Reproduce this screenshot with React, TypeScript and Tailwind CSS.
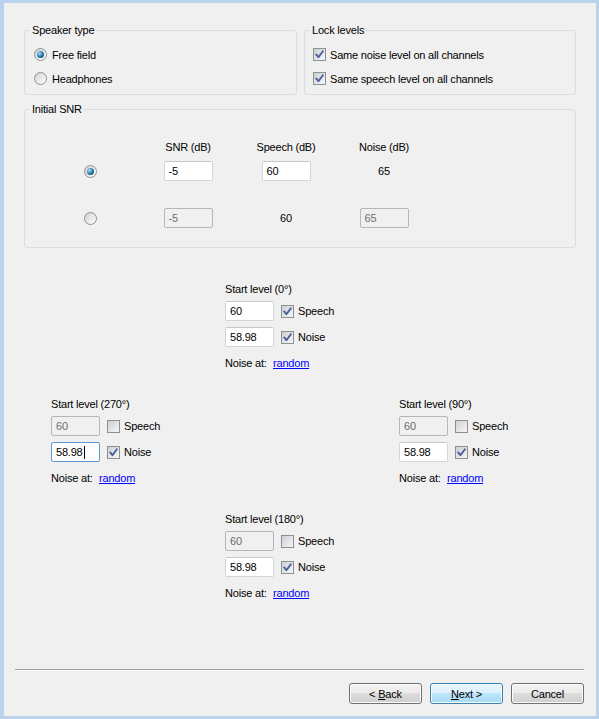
import type { ReactNode } from 'react'

function GroupBox({ title, className, children }: { title: string; className: string; children: ReactNode }) {
  return (
    <div className={`relative rounded-[3px] border border-[#d5dfe5] ${className}`}>
      <span className="absolute -top-[8px] left-[5px] bg-[#f0f0f0] px-[2px] leading-[14px]">{title}</span>
      {children}
    </div>
  )
}

function Radio({ checked }: { checked?: boolean }) {
  return (
    <span className="flex h-[13px] w-[13px] shrink-0 items-center justify-center rounded-full border border-[#8e8f8f] bg-[linear-gradient(135deg,#d2d2d2,#ffffff)]">
      {checked && (
        <span className="h-[7px] w-[7px] rounded-full bg-[radial-gradient(circle_at_35%_35%,#a6e1ff,#1e6fa5_55%,#0b3f66)]" />
      )}
    </span>
  )
}

function Check({ checked }: { checked?: boolean }) {
  return (
    <span className="flex h-[13px] w-[13px] shrink-0 items-center justify-center border border-[#8e8f8f] bg-white">
      <span className="flex h-[11px] w-[11px] items-center justify-center bg-[linear-gradient(135deg,#cbcfd5,#f7f7f7)]">
        {checked && (
          <svg width="11" height="11" viewBox="0 0 11 11">
            <path d="M2.2 5.4 L4.4 8.2 L8.9 2.2" fill="none" stroke="#4a5f97" strokeWidth="1.9" strokeLinecap="round" strokeLinejoin="round" />
          </svg>
        )}
      </span>
    </span>
  )
}

function Field({ value, disabled, focused }: { value: string; disabled?: boolean; focused?: boolean }) {
  const look = disabled
    ? 'border-[#b4b7ba] bg-[#f0f0f0] text-[#6d6d6d]'
    : focused
      ? 'border-[#5b9bd5] bg-white'
      : 'border-[#d2d5da] border-t-[#c4c8ce] bg-white'
  return (
    <div className={`flex h-[20px] w-[49px] shrink-0 items-center rounded-[2px] border pl-[4px] ${look}`}>
      {value}
      {focused && <span className="ml-[1px] h-[13px] w-[1px] bg-black" />}
    </div>
  )
}

function StartLevel({ angle, speech, focused }: { angle: string; speech?: boolean; focused?: boolean }) {
  return (
    <div className="flex flex-col">
      <div className="h-[14px]">Start level ({angle})</div>
      <div className="mt-[5px] flex items-center">
        <Field value="60" disabled={!speech} />
        <span className="ml-[7px]"><Check checked={speech} /></span>
        <span className="ml-[4px]">Speech</span>
      </div>
      <div className="mt-[6px] flex items-center">
        <Field value="58.98" focused={focused} />
        <span className="ml-[7px]"><Check checked /></span>
        <span className="ml-[4px]">Noise</span>
      </div>
      <div className="mt-[9px] flex h-[14px]">
        <span className="w-[48px]">Noise at:</span>
        <a className="text-[#0000ff] underline">random</a>
      </div>
    </div>
  )
}

function Button({ children, primary }: { children: ReactNode; primary?: boolean }) {
  return (
    <button
      className={`flex h-[21px] w-[73px] items-center justify-center rounded-[3px] border shadow-[inset_0_0_0_1px_#fcfcfc] ${
        primary
          ? 'border-[#3c7fb1] bg-[linear-gradient(#eaf6fd_0%,#d9f0fc_50%,#bee6fd_50%,#a7d9f5_100%)]'
          : 'border-[#707070] bg-[linear-gradient(#f2f2f2_0%,#ebebeb_50%,#dddddd_50%,#cfcfcf_100%)]'
      }`}
    >
      <span className="whitespace-pre">{children}</span>
    </button>
  )
}

export default function App() {
  return (
    <div className="h-[719px] w-[599px] bg-[#bad2ec] pb-[3px] pl-[4px] pr-[3px] pt-[3px] font-['Liberation_Sans',Arial,sans-serif] text-[11px] leading-[14px] tracking-[-0.2px] text-black">
      <div className="flex h-full flex-col bg-[#f0f0f0]">
        <div className="flex gap-[7px] pl-[20px] pt-[27px]">
          <GroupBox title="Speaker type" className="h-[65px] w-[273px]">
            <div className="flex flex-col gap-[11px] pl-[9px] pt-[17px]">
              <div className="flex h-[13px] items-center gap-[5px]">
                <Radio checked />
                <span>Free field</span>
              </div>
              <div className="flex h-[13px] items-center gap-[5px]">
                <Radio />
                <span>Headphones</span>
              </div>
            </div>
          </GroupBox>
          <GroupBox title="Lock levels" className="h-[65px] w-[272px]">
            <div className="flex flex-col gap-[11px] pl-[8px] pt-[17px]">
              <div className="flex h-[13px] items-center gap-[4px]">
                <Check checked />
                <span>Same noise level on all channels</span>
              </div>
              <div className="flex h-[13px] items-center gap-[4px]">
                <Check checked />
                <span>Same speech level on all channels</span>
              </div>
            </div>
          </GroupBox>
        </div>

        <div className="ml-[20px] mt-[14px]">
          <GroupBox title="Initial SNR" className="h-[139px] w-[552px]">
            <div className="pl-[16px] pt-[30px]">
              <div className="grid h-[14px] grid-cols-[repeat(4,98px)] justify-items-center">
                <span />
                <span>SNR (dB)</span>
                <span>Speech (dB)</span>
                <span>Noise (dB)</span>
              </div>
              <div className="mt-[7px] grid h-[20px] grid-cols-[repeat(4,98px)] items-center justify-items-center">
                <Radio checked />
                <Field value="-5" />
                <Field value="60" />
                <span>65</span>
              </div>
              <div className="mt-[27px] grid h-[20px] grid-cols-[repeat(4,98px)] items-center justify-items-center">
                <Radio />
                <Field value="-5" disabled />
                <span>60</span>
                <Field value="65" disabled />
              </div>
            </div>
          </GroupBox>
        </div>

        <div className="mt-[34px] pl-[221px]">
          <StartLevel angle="0°" speech />
        </div>
        <div className="mt-[27px] flex pl-[47px]">
          <div className="w-[348px]">
            <StartLevel angle="270°" focused />
          </div>
          <StartLevel angle="90°" />
        </div>
        <div className="mt-[27px] pl-[221px]">
          <StartLevel angle="180°" />
        </div>

        <div className="mt-auto pb-[12px]">
          <div className="ml-[11px] mr-[12px] h-[2px] border-b border-t border-b-white border-t-[#a0a0a0]" />
          <div className="mt-[12px] flex justify-end gap-[8px] pr-[12px]">
            <Button>
              {'< '}<span className="underline">B</span>ack
            </Button>
            <Button primary>
              <span className="underline">N</span>ext &gt;
            </Button>
            <Button>Cancel</Button>
          </div>
        </div>
      </div>
    </div>
  )
}
